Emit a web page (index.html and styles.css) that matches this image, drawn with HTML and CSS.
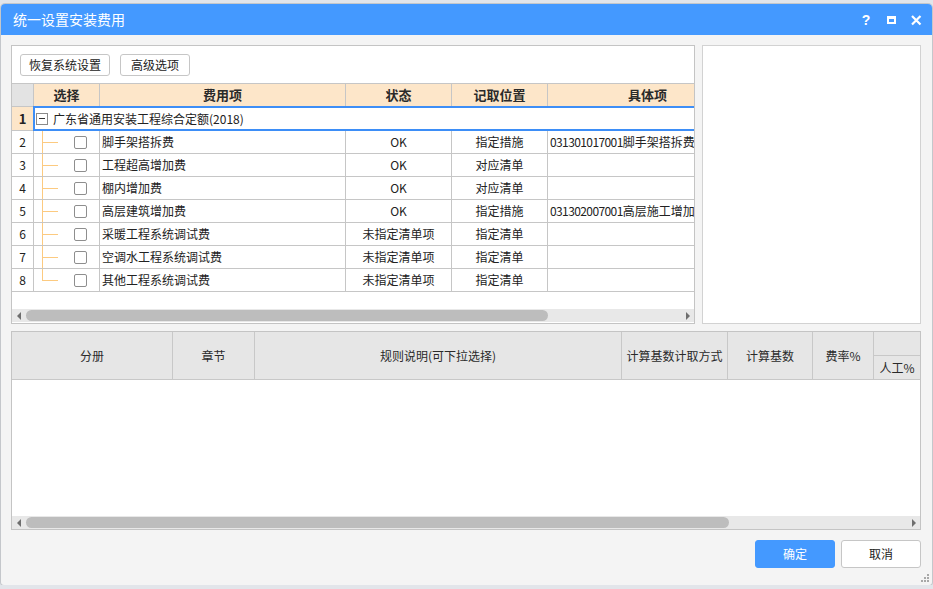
FILE: index.html
```html
<!DOCTYPE html>
<html lang="zh-CN">
<head>
<meta charset="utf-8">
<title>统一设置安装费用</title>
<link rel="stylesheet" href="styles.css">
</head>
<body>
<div class="dialog">
  <div class="titlebar">
    <span class="title">统一设置安装费用</span>
    <div class="win-btns">
      <span class="wb help">?</span>
      <svg class="wb" width="12" height="12" viewBox="0 0 12 12"><path d="M2 2 H11 V10 H2 Z M4 5 V8 H9 V5 Z" fill="#fff" fill-rule="evenodd"/></svg>
      <svg class="wb" width="12" height="12" viewBox="0 0 12 12"><path d="M2 2 L10.5 10.5 M10.5 2 L2 10.5" stroke="#fff" stroke-width="2.2" fill="none"/></svg>
    </div>
  </div>
  <div class="body">
    <div class="top-row">
      <div class="panel main">
        <div class="toolbar">
          <button class="btn restore">恢复系统设置</button>
          <button class="btn adv">高级选项</button>
        </div>
        <div class="grid">
          <div class="row head">
            <div class="c rn"></div>
            <div class="c sel">选择</div>
            <div class="c name">费用项</div>
            <div class="c status">状态</div>
            <div class="c loc">记取位置</div>
            <div class="c detail">具体项</div>
          </div>
          <div class="row first">
            <div class="c rn">1</div>
            <div class="c group-cell"><span class="minus"></span><span>广东省通用安装工程综合定额(2018)</span></div>
          </div>
          <div class="row">
            <div class="c rn">2</div>
            <div class="c sel t"><span class="tree"></span><span class="cb"></span></div>
            <div class="c name">脚手架搭拆费</div>
            <div class="c status">OK</div>
            <div class="c loc">指定措施</div>
            <div class="c detail"><span class="code">031301017001</span>脚手架搭拆费</div>
          </div>
          <div class="row">
            <div class="c rn">3</div>
            <div class="c sel t"><span class="tree"></span><span class="cb"></span></div>
            <div class="c name">工程超高增加费</div>
            <div class="c status">OK</div>
            <div class="c loc">对应清单</div>
            <div class="c detail"></div>
          </div>
          <div class="row">
            <div class="c rn">4</div>
            <div class="c sel t"><span class="tree"></span><span class="cb"></span></div>
            <div class="c name">棚内增加费</div>
            <div class="c status">OK</div>
            <div class="c loc">对应清单</div>
            <div class="c detail"></div>
          </div>
          <div class="row">
            <div class="c rn">5</div>
            <div class="c sel t"><span class="tree"></span><span class="cb"></span></div>
            <div class="c name">高层建筑增加费</div>
            <div class="c status">OK</div>
            <div class="c loc">指定措施</div>
            <div class="c detail"><span class="code">031302007001</span>高层施工增加</div>
          </div>
          <div class="row">
            <div class="c rn">6</div>
            <div class="c sel t"><span class="tree"></span><span class="cb"></span></div>
            <div class="c name">采暖工程系统调试费</div>
            <div class="c status">未指定清单项</div>
            <div class="c loc">指定清单</div>
            <div class="c detail"></div>
          </div>
          <div class="row">
            <div class="c rn">7</div>
            <div class="c sel t"><span class="tree"></span><span class="cb"></span></div>
            <div class="c name">空调水工程系统调试费</div>
            <div class="c status">未指定清单项</div>
            <div class="c loc">指定清单</div>
            <div class="c detail"></div>
          </div>
          <div class="row">
            <div class="c rn">8</div>
            <div class="c sel t"><span class="tree last"></span><span class="cb"></span></div>
            <div class="c name">其他工程系统调试费</div>
            <div class="c status">未指定清单项</div>
            <div class="c loc">指定清单</div>
            <div class="c detail"></div>
          </div>
        </div>
        <div class="hscroll">
          <span class="arrow-l"></span><span class="thumb upper"></span><span class="arrow-r"></span>
        </div>
      </div>
      <div class="panel side"></div>
    </div>
    <div class="panel lower">
      <div class="lhead">
        <div class="lh w1">分册</div>
        <div class="lh w2">章节</div>
        <div class="lh w3">规则说明(可下拉选择)</div>
        <div class="lh w4">计算基数计取方式</div>
        <div class="lh w5">计算基数</div>
        <div class="lh w6">费率%</div>
        <div class="lh grp">
          <div class="grp-top"></div>
          <div class="grp-sub">
            <div class="sub">人工%</div>
            <div class="sub"></div>
          </div>
        </div>
      </div>
      <div class="lbody"></div>
      <div class="hscroll low">
        <span class="arrow-l"></span><span class="thumb lower-t"></span><span class="arrow-r"></span>
      </div>
    </div>
    <div class="footer">
      <button class="btn big primary">确定</button>
      <button class="btn big">取消</button>
    </div>
  </div>
  <svg class="grip" width="10" height="10" viewBox="0 0 10 10">
    <rect x="7" y="1" width="2" height="2" fill="#a8a8a8"/>
    <rect x="4" y="4" width="2" height="2" fill="#a8a8a8"/>
    <rect x="7" y="4" width="2" height="2" fill="#a8a8a8"/>
    <rect x="1" y="7" width="2" height="2" fill="#a8a8a8"/>
    <rect x="4" y="7" width="2" height="2" fill="#a8a8a8"/>
    <rect x="7" y="7" width="2" height="2" fill="#a8a8a8"/>
  </svg>
</div>
</body>
</html>
```
FILE: styles.css
```css
html {
  background: #e2e5ea;
}
body {
  margin: 0;
  font-family: "Noto Sans CJK SC", "Noto Sans", sans-serif;
  font-size: 12px;
  color: #222;
}
.dialog {
  position: relative;
  margin: 4px 0 0 1px;
  width: 931px;
  height: 581px;
  background: #f4f4f4;
  border-radius: 4px 4px 3px 3px;
  box-shadow: 0 0 0 1px rgba(0, 0, 0, 0.13);
  display: flex;
  flex-direction: column;
  overflow: hidden;
}
.titlebar {
  flex: none;
  height: 31px;
  background: #4499ff;
  color: #fff;
  display: flex;
  align-items: center;
  padding: 0 10px 0 12px;
}
.title {
  font-size: 14px;
  line-height: 31px;
}
.win-btns {
  margin-left: auto;
  display: flex;
  align-items: center;
  gap: 13px;
}
.wb {
  width: 12px;
  height: 12px;
  display: block;
}
.help {
  font-family: "Liberation Sans", sans-serif;
  font-weight: bold;
  font-size: 14px;
  line-height: 12px;
  text-align: center;
}
.body {
  flex: 1;
  padding: 10px 11px 0 10px;
  display: flex;
  flex-direction: column;
}
.top-row {
  display: flex;
  gap: 7px;
  height: 279px;
  flex: none;
}
.panel {
  background: #fff;
  border: 1px solid #c4c4c4;
  box-sizing: border-box;
}
.panel.main {
  width: 684px;
  display: flex;
  flex-direction: column;
  overflow: hidden;
}
.panel.side {
  flex: 1;
  border-color: #d2d2d2;
}
.toolbar {
  display: flex;
  gap: 10px;
  padding: 8px 8px 0;
}
.btn {
  font-family: "Noto Sans CJK SC", sans-serif;
  font-size: 12px;
  height: 22px;
  padding: 0;
  background: #fff;
  border: 1px solid #c6c6c6;
  border-radius: 3px;
  color: #222;
  line-height: 18px;
}
.btn.restore { width: 90px; }
.btn.adv { width: 70px; }
.grid {
  margin-top: 7px;
  border-top: 1px solid #c6c6c6;
  overflow: hidden;
  flex: none;
}
.row {
  display: flex;
  height: 23px;
  border-bottom: 1px solid #c6c6c6;
  box-sizing: border-box;
}
.c {
  flex: none;
  box-sizing: border-box;
  border-right: 1px solid #c6c6c6;
  display: flex;
  align-items: center;
  white-space: nowrap;
  overflow: hidden;
  line-height: 16px;
}
.rn { width: 22px; justify-content: center; }
.sel { width: 66px; }
.name { width: 246px; padding-left: 2px; }
.status { width: 106px; justify-content: center; }
.loc { width: 96px; justify-content: center; }
.detail { width: 200px; padding-left: 2px; }
.head .c {
  background: #fde6c9;
  justify-content: center;
  font-weight: bold;
  font-size: 13px;
  color: #2a2a2a;
  padding: 0;
}
.head .rn { background: #e3e3e3; }
.row.first {
  height: 25px;
  margin-top: -1px;
  border-bottom: none;
}
.first .rn {
  width: 21px;
  border-right: none;
  border-top: 1px solid #c6c6c6;
  border-bottom: 1px solid #c6c6c6;
  background: #fde6c9;
  font-weight: bold;
  font-size: 13px;
}
.group-cell {
  width: 720px;
  border: 2px solid #3d8ef7;
  padding-left: 1px;
  gap: 5px;
}
.minus {
  width: 12px;
  height: 12px;
  box-sizing: border-box;
  border: 1px solid #8a8a8a;
  background: linear-gradient(#333, #333) center / 6px 1px no-repeat;
  flex: none;
}
.sel.t {
  padding-left: 8px;
  align-items: stretch;
}
.tree {
  width: 17px;
  flex: none;
  background:
    linear-gradient(#fcca80, #fcca80) 0 0 / 1px 100% no-repeat,
    linear-gradient(#fcca80, #fcca80) 0 50% / 16px 1px no-repeat;
}
.tree.last {
  background:
    linear-gradient(#fcca80, #fcca80) 0 0 / 1px 50% no-repeat,
    linear-gradient(#fcca80, #fcca80) 0 50% / 16px 1px no-repeat;
}
.cb {
  width: 13px;
  height: 13px;
  box-sizing: border-box;
  border: 1px solid #8e8e8e;
  border-radius: 2px;
  margin-left: 15px;
  align-self: center;
  background: #fff;
}
.code {
  letter-spacing: -0.6px;
}
.hscroll {
  flex: none;
  margin-top: auto;
  margin-bottom: 1px;
  height: 13px;
  background: #e8e8e8;
  display: flex;
  align-items: center;
}
.hscroll.low {
  margin-bottom: 0;
}
.arrow-l {
  width: 0;
  height: 0;
  border-top: 4px solid transparent;
  border-bottom: 4px solid transparent;
  border-right: 4px solid #6e6e6e;
  margin-left: 5px;
}
.arrow-r {
  width: 0;
  height: 0;
  border-top: 4px solid transparent;
  border-bottom: 4px solid transparent;
  border-left: 4px solid #6e6e6e;
  margin-left: auto;
  margin-right: 4px;
}
.thumb {
  height: 11px;
  border-radius: 6px;
  background: #bdbdbd;
  margin-left: 5px;
}
.thumb.upper { width: 522px; }
.thumb.lower-t { width: 703px; }
.panel.lower {
  margin-top: 7px;
  height: 199px;
  flex: none;
  display: flex;
  flex-direction: column;
  overflow: hidden;
}
.lhead {
  flex: none;
  display: flex;
  height: 48px;
  background: #e6e6e6;
  border-bottom: 1px solid #c8c8c8;
  box-sizing: border-box;
}
.lh {
  flex: none;
  box-sizing: border-box;
  border-right: 1px solid #c8c8c8;
  display: flex;
  align-items: center;
  justify-content: center;
  white-space: nowrap;
  color: #2a2a2a;
}
.w1 { width: 161px; }
.w2 { width: 82px; }
.w3 { width: 367px; }
.w4 { width: 106px; }
.w5 { width: 85px; }
.w6 { width: 61px; }
.lh.grp {
  width: 140px;
  flex-direction: column;
  align-items: stretch;
  border-right: none;
}
.grp-top {
  height: 24px;
  border-bottom: 1px solid #c8c8c8;
  box-sizing: border-box;
}
.grp-sub {
  flex: 1;
  display: flex;
}
.sub {
  width: 47px;
  flex: none;
  box-sizing: border-box;
  border-right: 1px solid #c8c8c8;
  display: flex;
  align-items: center;
  justify-content: center;
}
.lbody {
  flex: 1;
  background: #fff;
}
.footer {
  display: flex;
  justify-content: flex-end;
  gap: 6px;
  margin-top: 10px;
}
.btn.big {
  width: 80px;
  height: 28px;
  line-height: 24px;
}
.btn.primary {
  background: #4499ff;
  border-color: #4499ff;
  color: #fff;
}
.grip {
  position: absolute;
  right: 2px;
  bottom: 2px;
}
```
